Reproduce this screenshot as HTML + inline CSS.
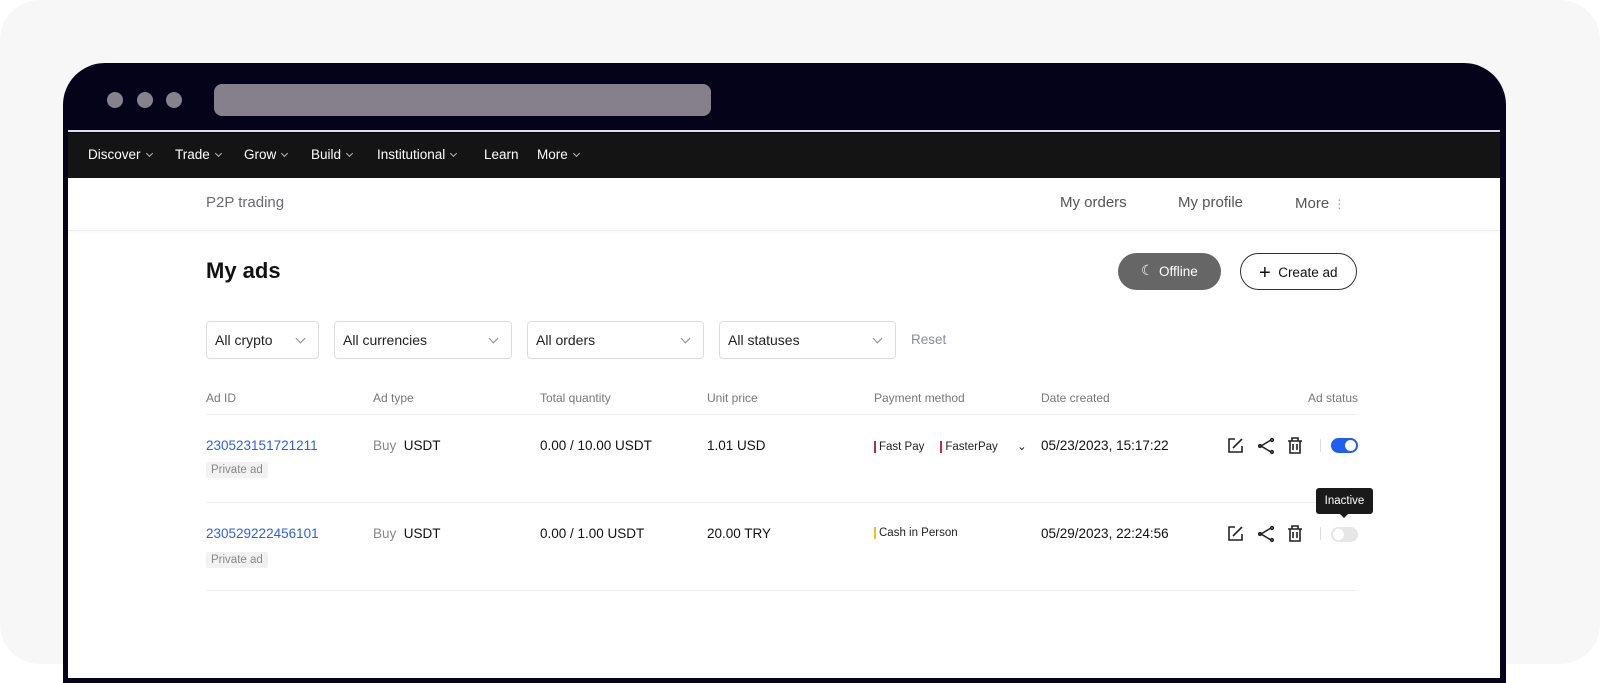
<!DOCTYPE html>
<html><head><style>
*{margin:0;padding:0;box-sizing:border-box}
body{width:1600px;height:664px;background:#fff;font-family:"Liberation Sans",sans-serif;position:relative;overflow:hidden}
.card{position:absolute;left:0;top:0;width:1600px;height:664px;background:#f7f7f7;border-radius:40px}
.win{position:absolute;left:63px;top:63px;width:1443px;height:620px;background:#05031a;border-radius:42px 42px 0 0}
.dot{position:absolute;top:92px;width:16px;height:16px;border-radius:50%;background:#85828e}
.url{position:absolute;left:214px;top:84px;width:497px;height:32px;border-radius:8px;background:#85808c}
.line{position:absolute;left:68px;top:130px;width:1432px;height:2px;background:#e0e0e0}
.nav{position:absolute;left:68px;top:133px;width:1432px;height:45px;background:#141414;color:#fff;font-size:13.5px}
.nav span{position:absolute;top:14px}
.nav i{display:inline-block;width:5px;height:5px;border-right:1px solid #bbb;border-bottom:1px solid #bbb;transform:rotate(45deg);margin-left:6px;position:relative;top:-3px}
.content{position:absolute;left:68px;top:178px;width:1432px;height:500px;background:#fff}
.sub{position:absolute;left:68px;top:178px;width:1432px;height:53px;border-bottom:1px solid #eee;box-shadow:0 1px 3px rgba(0,0,0,.04)}
.t{position:absolute;white-space:nowrap}
.sel{position:absolute;top:321px;height:38px;border:1px solid #ddd;border-radius:4px;font-size:14px;color:#222;padding:10px 8px}
.sel i{position:absolute;right:14px;top:13px;width:7px;height:7px;border-right:1px solid #888;border-bottom:1px solid #888;transform:rotate(45deg)}
.h{font-size:12px;color:#777;top:391px}
.row{font-size:13.5px;color:#111}
.tag{position:absolute;font-size:11.5px;color:#888;background:#f2f2f2;padding:2px 5px;border-radius:2px}
.hr{position:absolute;left:206px;width:1151px;height:1px;background:#eee}
</style></head><body>
<div class="card"></div>
<div class="win"></div>
<div class="dot" style="left:107px"></div><div class="dot" style="left:137px"></div><div class="dot" style="left:166px"></div>
<div class="url"></div>
<div class="line"></div>
<div class="nav">
<span style="left:20px">Discover<i></i></span>
<span style="left:107px">Trade<i></i></span>
<span style="left:176px">Grow<i></i></span>
<span style="left:243px">Build<i></i></span>
<span style="left:309px">Institutional<i></i></span>
<span style="left:416px">Learn</span>
<span style="left:469px">More<i></i></span>
</div>
<div class="content"></div>
<div class="sub"></div>
<div class="t" style="left:206px;top:194px;font-size:15px;color:#6a6a78">P2P trading</div>
<div class="t" style="left:1060px;top:194px;font-size:15px;color:#555">My orders</div>
<div class="t" style="left:1178px;top:194px;font-size:15px;color:#555">My profile</div>
<div class="t" style="left:1295px;top:195px;font-size:15px;color:#555">More <span style="color:#999;font-size:12px">⋮</span></div>
<div class="t" style="left:206px;top:258px;font-size:22px;font-weight:bold;color:#111">My ads</div>
<div class="t" style="left:1118px;top:253px;width:103px;height:37px;border-radius:19px;background:#666;color:#fff;font-size:13.5px;line-height:37px;padding-left:24px"><span style="position:absolute;left:23px;top:-1px;font-size:14px">☾</span><span style="margin-left:17px">Offline</span></div>
<div class="t" style="left:1240px;top:253px;width:117px;height:37px;border-radius:19px;border:1px solid #333;color:#111;font-size:13.5px;line-height:35px;padding-left:18px"><span style="font-size:20px;position:relative;top:2px">+</span>&nbsp; Create ad</div>
<div class="sel" style="left:206px;width:113px">All crypto<i></i></div>
<div class="sel" style="left:334px;width:178px">All currencies<i></i></div>
<div class="sel" style="left:527px;width:177px">All orders<i></i></div>
<div class="sel" style="left:719px;width:177px">All statuses<i></i></div>
<div class="t" style="left:911px;top:332px;font-size:13.5px;color:#8a8f9e">Reset</div>
<div class="t h" style="left:206px">Ad ID</div>
<div class="t h" style="left:373px">Ad type</div>
<div class="t h" style="left:540px">Total quantity</div>
<div class="t h" style="left:707px">Unit price</div>
<div class="t h" style="left:874px">Payment method</div>
<div class="t h" style="left:1041px">Date created</div>
<div class="t h" style="left:1308px">Ad status</div>
<div class="hr" style="top:414px"></div>
<div class="hr" style="top:502px"></div>
<div class="hr" style="top:590px"></div>

<div class="t row" style="left:206px;top:438px;color:#2e5fe0">230523151721211</div>
<div class="tag" style="left:206px;top:462px">Private ad</div>
<div class="t row" style="left:373px;top:438px"><span style="color:#888">Buy</span>&nbsp; USDT</div>
<div class="t row" style="left:540px;top:438px">0.00 / 10.00 USDT</div>
<div class="t row" style="left:707px;top:438px">1.01 USD</div>
<div class="t" style="left:874px;top:439px;font-size:11.5px;color:#222"><span style="border-left:2px solid #a0306a;padding-left:3px">Fast Pay</span>&nbsp;&nbsp;&nbsp;&nbsp; <span style="border-left:2px solid #c0284a;padding-left:3px">FasterPay</span>&nbsp;&nbsp;&nbsp;&nbsp;&nbsp; ⌄</div>
<div class="t row" style="left:1041px;top:438px">05/23/2023, 15:17:22</div>

<div class="t row" style="left:206px;top:526px;color:#2e5fe0">230529222456101</div>
<div class="tag" style="left:206px;top:552px">Private ad</div>
<div class="t row" style="left:373px;top:526px"><span style="color:#888">Buy</span>&nbsp; USDT</div>
<div class="t row" style="left:540px;top:526px">0.00 / 1.00 USDT</div>
<div class="t row" style="left:707px;top:526px">20.00 TRY</div>
<div class="t" style="left:874px;top:527px;font-size:11.5px;color:#222"><span style="border-left:2px solid #f0c020;padding-left:3px">Cash in Person</span></div>
<div class="t row" style="left:1041px;top:526px">05/29/2023, 22:24:56</div>

<svg style="position:absolute;left:1225px;top:436px" width="90" height="20" viewBox="0 0 90 20" fill="none" stroke="#222" stroke-width="1.6">
<path d="M10 3H4v13h13v-6M8 12l9-9"/>
<circle cx="47" cy="4" r="1.3"/><circle cx="35" cy="10" r="1.3"/><circle cx="47" cy="16" r="1.3"/><path d="M46 4l-10 6 10 6"/>
<path d="M63 5h14M67 5V2h6v3M65 5v12h10V5M68 8v6M72 8v6"/>
</svg>
<svg style="position:absolute;left:1225px;top:524px" width="90" height="20" viewBox="0 0 90 20" fill="none" stroke="#222" stroke-width="1.6">
<path d="M10 3H4v13h13v-6M8 12l9-9"/>
<circle cx="47" cy="4" r="1.3"/><circle cx="35" cy="10" r="1.3"/><circle cx="47" cy="16" r="1.3"/><path d="M46 4l-10 6 10 6"/>
<path d="M63 5h14M67 5V2h6v3M65 5v12h10V5M68 8v6M72 8v6"/>
</svg>
<div class="t" style="left:1320px;top:439px;width:1px;height:13px;background:#ddd"></div>
<div class="t" style="left:1320px;top:527px;width:1px;height:13px;background:#ddd"></div>
<div class="t" style="left:1331px;top:438px;width:27px;height:15px;border-radius:8px;background:#1e5ef0"><div style="position:absolute;right:2px;top:2px;width:11px;height:11px;border-radius:50%;background:#fff"></div></div>
<div class="t" style="left:1331px;top:527px;width:27px;height:15px;border-radius:8px;background:#e6e6e6"><div style="position:absolute;left:2px;top:2px;width:11px;height:11px;border-radius:50%;background:#fff"></div></div>
<div class="t" style="left:1316px;top:488px;width:57px;height:26px;background:#1a1a1a;border-radius:3px;color:#fff;font-size:11.5px;line-height:26px;text-align:center">Inactive</div>
<div class="t" style="left:1339px;top:513px;width:0;height:0;border-left:5px solid transparent;border-right:5px solid transparent;border-top:5px solid #1a1a1a"></div>
<div style="position:absolute;left:63px;top:178px;width:5px;height:486px;background:#05031a"></div>
<div style="position:absolute;left:1500px;top:178px;width:6px;height:486px;background:#05031a"></div>
</body></html>
